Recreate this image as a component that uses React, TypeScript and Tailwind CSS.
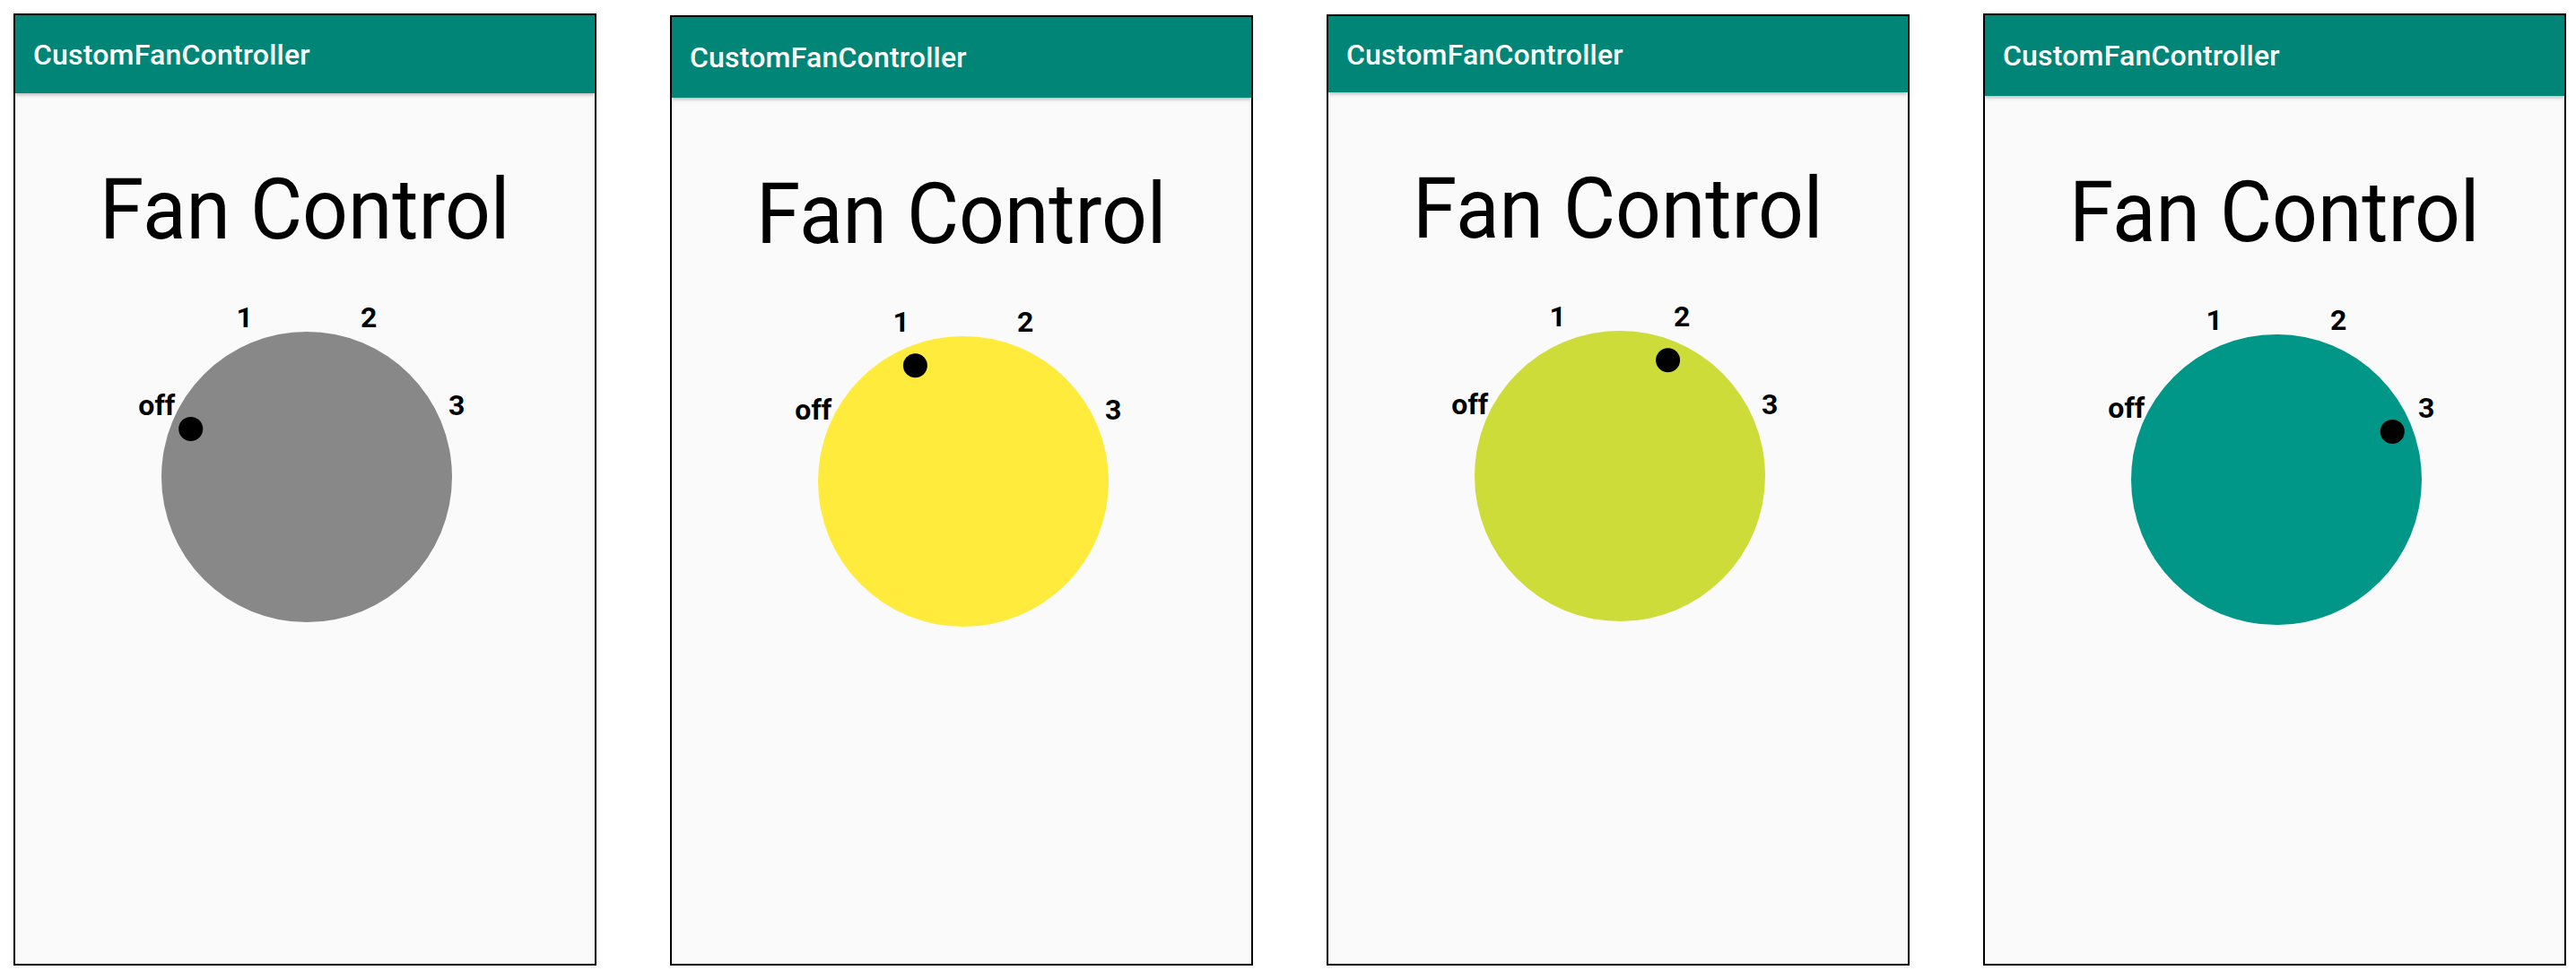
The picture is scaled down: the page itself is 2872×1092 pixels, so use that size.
const labels = [
  { text: "off", x: -167.2, y: -69.3 },
  { text: "1", x: -69.3, y: -167.2 },
  { text: "2", x: 69.3, y: -167.2 },
  { text: "3", x: 167.2, y: -69.3 },
];

const markers = [
  { x: -129.3, y: -53.6 },
  { x: -53.6, y: -129.3 },
  { x: 53.6, y: -129.3 },
  { x: 129.3, y: -53.6 },
];

const panels = [
  { color: "#888888", pos: 0, box: "mt-[15px] h-[1062px]", bar: "h-[87px]" },
  { color: "#ffeb3b", pos: 1, box: "mt-[17px] h-[1060px]", bar: "h-[90px]" },
  { color: "#cddc39", pos: 2, box: "mt-[16px] h-[1061px]", bar: "h-[85px]" },
  { color: "#009688", pos: 3, box: "mt-[15px] h-[1062px]", bar: "h-[90px]" },
];

function Dial({ color, pos }: { color: string; pos: number }) {
  const cx = 232;
  const cy = 210;
  return (
    <svg width={460} height={420} viewBox="0 0 460 420" className="mt-[41px]">
      <circle cx={cx} cy={cy} r={162} fill={color} />
      {labels.map((l) => (
        <text
          key={l.text}
          x={cx + l.x}
          y={cy + l.y}
          textAnchor="middle"
          fontFamily="Roboto, sans-serif"
          fontWeight={700}
          fontSize={32}
          fill="#000"
        >
          {l.text}
        </text>
      ))}
      <circle cx={cx + markers[pos].x} cy={cy + markers[pos].y} r={13.5} fill="#000" />
    </svg>
  );
}

function Phone({ color, pos, box, bar }: any) {
  return (
    <div className={`w-[650px] shrink-0 border-2 border-black bg-[#fafafa] flex flex-col ${box}`}>
      <div
        className={`relative z-10 flex items-center bg-[#008577] pl-[20px] shadow-[0_2px_4px_rgba(0,0,0,0.25)] ${bar}`}
      >
        <span className="text-[32px] font-medium text-white font-['Roboto',sans-serif] tracking-[0.2px]">
          CustomFanController
        </span>
      </div>
      <div className="flex flex-col items-center">
        <h1 className="mt-[83px] text-[94px] leading-[94px] font-normal text-black font-['Roboto',sans-serif] scale-x-[0.95]">
          Fan Control
        </h1>
        <Dial color={color} pos={pos} />
      </div>
    </div>
  );
}

export default function App() {
  return (
    <div className="w-[2872px] h-[1092px] bg-white flex items-start gap-[82px] pl-[15px]">
      {panels.map((p, i) => (
        <Phone key={i} {...p} />
      ))}
    </div>
  );
}
